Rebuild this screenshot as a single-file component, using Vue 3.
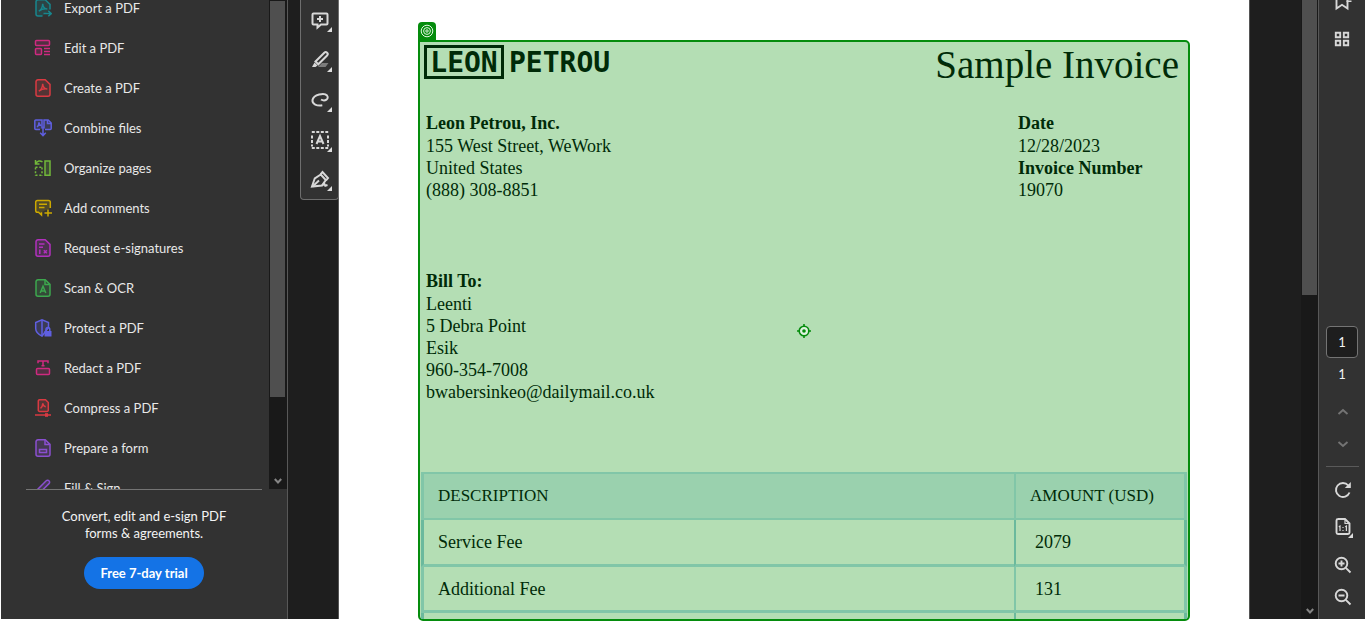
<script setup>
import { ref } from 'vue'

const page = 'M4 .8h7.2l4.8 4.6v9.800a2 2 0 0 1-2 2H4a2 2 0 0 1-2-2V2.800a2 2 0 0 1 2-2z'
const acrobat = 'M4.800 12.200c2.200-1.200 3.800-4 3.900-7.400.2 3.400 1.900 5.200 4.600 5.200-3-.5-6 .4-8.500 2.200z'

const tools = [
  { name: 'Export a PDF', color: '#17868d', shapes: [
    { d: 'M8.500 17H4a2 2 0 0 1-2-2V2.800a2 2 0 0 1 2-2h7.200l4.800 4.600v5', f: 1 },
    { d: acrobat }, { d: 'M9.500 14.600h7.500M14.300 11.900l2.900 2.700-2.900 2.700' } ] },
  { name: 'Edit a PDF', color: '#cf2a80', shapes: [
    { d: 'M2.500 1.500h12a1 1 0 0 1 1 1v3a1 1 0 0 1-1 1h-12a1 1 0 0 1-1-1v-3a1 1 0 0 1 1-1z', f: 1 },
    { d: 'M2.500 9.500h4a1 1 0 0 1 1 1v4a1 1 0 0 1-1 1h-4a1 1 0 0 1-1-1v-4a1 1 0 0 1 1-1z', f: 1 },
    { d: 'M10 9.500h6M10 12.500h6M10 15.500h6' } ] },
  { name: 'Create a PDF', color: '#d93a42', shapes: [{ d: page, f: 1 }, { d: acrobat }] },
  { name: 'Combine files', color: '#5f5fe0', shapes: [
    { d: 'M6 10.500H1.800a1 1 0 0 1-1-1V2a1 1 0 0 1 1-1H8v8.500M11 10.500h5.200a1 1 0 0 0 1-1V4l-3-3H10v8.500', f: 1 },
    { d: 'M3 8c1.200-.8 2-2.600 2-4.800.2 2 .9 3.200 2.400 3.400M13.500 1v3.500h3.500' },
    { d: 'M9 7.500v9M6.200 13.800L9 16.600l2.800-2.800' } ] },
  { name: 'Organize pages', color: '#72b83a', shapes: [
    { d: 'M11 2h5v14.300h-5z', f: 1 },
    { d: 'M1.500 8.300h7M8 8.500v8M1.500 16.300h7M1.500 8.500v8', dash: '2 1.800' },
    { d: 'M1.800 4.500C3.500 1.500 6 1.300 8.500 2.800M1.500 1v4h4' } ] },
  { name: 'Add comments', color: '#cda900', shapes: [
    { d: 'M7.500 13.200V16L4.500 13.200H3.500a1.800 1.800 0 0 1-1.800-1.800V3.200a1.800 1.800 0 0 1 1.800-1.800h11a1.800 1.800 0 0 1 1.800 1.800V9', f: 1 },
    { d: 'M5 5.300h8M5 8.500h5.500M14 10.500v7M10.500 14H18' } ] },
  { name: 'Request e-signatures', color: '#b130bd', shapes: [
    { d: page, f: 1 }, { d: 'M5 5h5.500M5 8.300h4M5.800 10.500v3.300M9.800 11.300l3 3M12.800 11.300l-3 3M5 14.300h1.500' } ] },
  { name: 'Scan & OCR', color: '#3da74e', shapes: [
    { d: page, f: 1 }, { d: 'M11 1v4.500h4.500M6.200 14L9 7.300l2.800 6.700M7.200 12h3.600' } ] },
  { name: 'Protect a PDF', color: '#5f5fe0', shapes: [
    { d: 'M14.500 8.500V3.500L8 .8 1.700 3.500v6c0 3.300 2.500 5.800 6.300 7.700z', f: 1 }, { d: 'M8 1v16' },
    { d: 'M12 12v-1.500a1.900 1.900 0 0 1 3.800 0V12' }, { d: 'M10.500 12h7v5.500h-7z', solid: 1 } ] },
  { name: 'Redact a PDF', color: '#cf2a80', shapes: [
    { d: 'M3.500 9.500h11a1 1 0 0 1 1 1v4a1 1 0 0 1-1 1h-11a1 1 0 0 1-1-1v-4a1 1 0 0 1 1-1z', f: 1 },
    { d: 'M4 4.200V2h10v2.200M9 2v5M7.500 6.800h3' } ] },
  { name: 'Compress a PDF', color: '#d93a42', shapes: [
    { d: 'M5.500.8h6L14.300 3.500v7.700a1.200 1.200 0 0 1-1.200 1.200H5.500a1.200 1.200 0 0 1-1.200-1.200V2a1.200 1.200 0 0 1 1.200-1.200z', f: 1 },
    { d: 'M6.500 9.300c1.300-.8 2.200-2.500 2.300-5 .2 2.300 1.200 3.400 3 3.400M1 16h16' }, { d: 'M12.500 14.200v3.600', w: 3 } ] },
  { name: 'Prepare a form', color: '#8a4fd0', shapes: [
    { d: page, f: 1 }, { d: 'M11 1v4.500h4.500M5.500 10.500h7v3h-7z' } ] },
  { name: 'Fill & Sign', color: '#8a4fd0', shapes: [
    { d: 'M2.500 15l1-4.500 8.700-8.700a1.900 1.900 0 0 1 2.800 0 1.900 1.900 0 0 1 0 2.800L6.500 13z', f: 1 } ] }
]

const quickTools = [
  { name: 'Add comment', shapes: [
    { d: 'M3.500 3.500h13a1 1 0 0 1 1 1v9a1 1 0 0 1-1 1H11L7.500 17.500v-3h-4a1 1 0 0 1-1-1v-9a1 1 0 0 1 1-1z' },
    { d: 'M10 6v6M7 9h6' } ] },
  { name: 'Highlight', shapes: [
    { d: 'M8 17l4-4h6.500l-3 4z', solid: 1, dim: 1 },
    { d: 'M5.500 11.500L14.300 2.700a1.900 1.900 0 0 1 2.800 2.800L8.300 14.300z' },
    { d: 'M4.500 12.500l3 3L5.500 17H2z', solid: 1 } ] },
  { name: 'Draw', shapes: [{ d: 'M11 9.500c4 2.500 8.500-.8 6-4C14.500 2.500 3.500 4.300 2.500 10c-.6 4.200 4.500 6.200 9.800 5.300' }] },
  { name: 'Select text', shapes: [
    { d: 'M1.800 2h16.400M1.800 18h16.400M2 5.500v11M18 5.500v11', dash: '3 1.500' },
    { d: 'M6.500 14L10 6l3.500 8M7.600 11.500h4.800' } ] },
  { name: 'Sign', shapes: [
    { d: 'M2 16.500L4.800 8.300l6-3.800 5 5.500-3.800 5.500z' }, { d: 'M10.500 4.300l2-2.300 5.500 6L16 10.500' },
    { d: 'M2.500 16.500l6.500-6M12 15.500l2.300-1.800 1 2 2.200-.7' } ] }
]

const rows = [
  { description: 'Service Fee', amount: '2079' },
  { description: 'Additional Fee', amount: '131' },
  { description: '', amount: '' }
]

const currentPage = ref('1')
</script>

<template>
  <div class="viewer">
    <aside class="sidebar">
      <div class="tools">
        <ul class="tool-list">
          <li v-for="t in tools" :key="t.name">
            <button type="button" class="tool" :style="{ '--tint': t.color }">
              <svg class="tool-icon" viewBox="0 0 18 18" aria-hidden="true">
                <path v-for="(s, i) in t.shapes" :key="i" :d="s.d" :class="{ tinted: s.f, solid: s.solid }"
                  :stroke-dasharray="s.dash" :stroke-width="s.w || 1.5" />
              </svg>
              <span>{{ t.name }}</span>
            </button>
          </li>
        </ul>
        <div class="scrollbar tools-scroll">
          <div class="thumb tools-thumb"></div>
          <svg class="scroll-arrow" viewBox="0 0 8 6" aria-hidden="true"><path d="M.8 1L4 4.500 7.200 1" /></svg>
        </div>
      </div>
      <footer class="promo">
        <p>Convert, edit and e-sign PDF<br>forms &amp; agreements.</p>
        <button type="button" class="trial">Free 7-day trial</button>
      </footer>
    </aside>

    <div class="gutter">
      <nav class="quickbar" aria-label="Quick tools">
        <button v-for="q in quickTools" :key="q.name" type="button" class="quick" :aria-label="q.name">
          <svg viewBox="0 0 20 20" aria-hidden="true">
            <path v-for="(s, i) in q.shapes" :key="i" :d="s.d" :class="{ solid: s.solid, dim: s.dim }" :stroke-dasharray="s.dash" />
          </svg>
          <i class="corner"></i>
        </button>
      </nav>
    </div>

    <main class="paper">
      <section class="invoice">
        <span class="tag">
          <svg viewBox="0 0 14 14" aria-hidden="true">
            <circle cx="7" cy="7" r="5.800" /><circle cx="7" cy="7" r="3.400" /><circle cx="7" cy="7" r="1.200" />
          </svg>
        </span>
        <header class="head">
          <div class="logo"><span class="boxed">LEON</span><span class="plain">PETROU</span></div>
          <h1>Sample Invoice</h1>
        </header>
        <div class="meta">
          <address>
            <strong>Leon Petrou, Inc.</strong>
            <span>155 West Street, WeWork</span>
            <span>United States</span>
            <span>(888) 308-8851</span>
          </address>
          <div class="dates">
            <strong>Date</strong>
            <span>12/28/2023</span>
            <strong>Invoice Number</strong>
            <span>19070</span>
          </div>
        </div>
        <address class="bill">
          <strong>Bill To:</strong>
          <span>Leenti</span>
          <span>5 Debra Point</span>
          <span>Esik</span>
          <span>960-354-7008</span>
          <span>bwabersinkeo@dailymail.co.uk</span>
        </address>
        <div class="table-clip">
          <table>
            <thead>
              <tr><th scope="col">DESCRIPTION</th><th scope="col" class="amount">AMOUNT (USD)</th></tr>
            </thead>
            <tbody>
              <tr v-for="(r, i) in rows" :key="i">
                <td>{{ r.description }}</td>
                <td class="amount">{{ r.amount }}</td>
              </tr>
            </tbody>
          </table>
        </div>
        <svg class="anchor" viewBox="0 0 14 14" aria-hidden="true">
          <circle cx="7" cy="7" r="4.800" fill="#dff3df" /><path d="M7 0v3M7 11v3M0 7h3M11 7h3" />
          <circle class="dot" cx="7" cy="7" r="1.800" />
        </svg>
      </section>
    </main>

    <div class="margin"></div>
    <div class="scrollbar page-scroll">
      <div class="thumb page-thumb"></div>
      <svg class="scroll-arrow" viewBox="0 0 8 6" aria-hidden="true"><path d="M.8 1L4 4.500 7.200 1" /></svg>
    </div>

    <aside class="rail">
      <div class="rail-top">
        <button type="button" class="rail-btn mark" aria-label="Bookmarks">
          <svg viewBox="0 0 20 20" aria-hidden="true"><path d="M4.500 0v16.500L10 12.800l5.500 3.700V0" /><path class="solid" d="M14.500 8.500h5v1.500h-5z" /></svg>
        </button>
        <button type="button" class="rail-btn" aria-label="Page thumbnails">
          <svg viewBox="0 0 20 20" aria-hidden="true"><path d="M3.800 3.800h4.400v4.400H3.800zM11.800 3.800h4.400v4.400h-4.400zM3.800 11.800h4.400v4.400H3.800zM11.800 11.800h4.400v4.400h-4.400z" /></svg>
        </button>
      </div>
      <div class="rail-bottom">
        <input v-model="currentPage" class="page-input" aria-label="Page number">
        <span class="page-total">1</span>
        <button type="button" class="rail-btn faint" aria-label="Previous page">
          <svg viewBox="0 0 20 20" aria-hidden="true"><path d="M5.500 12l4.500-4 4.500 4" /></svg>
        </button>
        <button type="button" class="rail-btn faint" aria-label="Next page">
          <svg viewBox="0 0 20 20" aria-hidden="true"><path d="M5.500 8l4.500 4 4.500-4" /></svg>
        </button>
        <hr>
        <button type="button" class="rail-btn" aria-label="Rotate">
          <svg viewBox="0 0 20 20" aria-hidden="true"><path d="M16.500 12.500A7 7 0 1 1 15.300 5.500" /><path class="solid" d="M17.800 2v6h-6z" /></svg>
        </button>
        <button type="button" class="rail-btn fit" aria-label="Actual size">
          <svg viewBox="0 0 20 20" aria-hidden="true"><path d="M4.500 2h7.500l4.500 4.500v9a1.500 1.500 0 0 1-1.500 1.500H5a1.500 1.500 0 0 1-1.500-1.500V3.500A1.500 1.500 0 0 1 5 2z" /><path class="thin" d="M12 2v4.500h4.500M5.800 9.800L7 9v5M12.200 9.800l1.200-.8v5M10 10v1M10 13v1" /></svg>
          <i class="corner"></i>
        </button>
        <button type="button" class="rail-btn" aria-label="Zoom in">
          <svg viewBox="0 0 20 20" aria-hidden="true"><circle cx="8.500" cy="8.500" r="5.800" /><path d="M12.800 12.800L17.500 17.500M8.500 5.500v6M5.500 8.500h6" /></svg>
        </button>
        <button type="button" class="rail-btn" aria-label="Zoom out">
          <svg viewBox="0 0 20 20" aria-hidden="true"><circle cx="8.500" cy="8.500" r="5.800" /><path d="M12.800 12.800L17.500 17.500M5.500 8.500h6" /></svg>
        </button>
      </div>
    </aside>
  </div>
</template>

<style>
body { margin: 0; background: #fff; }
</style>

<style scoped>
.viewer {
  box-sizing: border-box;
  display: flex;
  height: 100vh;
  padding: 0 1px;
  overflow: hidden;
  background: #fff;
  font-family: Lato, "Open Sans", sans-serif;
  font-size: 13px;
  color: #e8e8e8;
}
.viewer * { box-sizing: border-box; }
button { padding: 0; border: 0; background: none; color: inherit; font: inherit; }
svg { display: block; fill: none; stroke: currentColor; }

.sidebar {
  display: flex;
  flex-direction: column;
  flex: none;
  width: 287px;
  margin-bottom: 2px;
  border-right: 1px solid #585858;
  background: #323232;
}
.tools { display: flex; flex: 1; min-height: 0; overflow: hidden; }
.tool-list { flex: 1; margin: -12px 0 0; padding: 0; list-style: none; }
.tool { display: flex; align-items: center; gap: 12px; width: 100%; height: 40px; padding-left: 33px; text-align: left; }
.tool-icon { width: 18px; height: 18px; color: var(--tint); }
.tinted { fill: color-mix(in srgb, var(--tint) 20%, transparent); }
.solid { fill: currentColor; stroke: none; }
.dim { opacity: 0.45; }

.scrollbar {
  display: flex;
  flex-direction: column;
  justify-content: space-between;
  align-items: center;
  flex: none;
  width: 17px;
  padding: 1px 1px 5px;
  background: #191919;
}
.tools-scroll { width: 18px; padding-right: 2px; }
.thumb { width: 100%; background: #4f4f4f; }
.tools-thumb { height: 82%; }
.page-thumb { height: 48%; }
.scroll-arrow { width: 8px; height: 6px; color: #858585; stroke-width: 2; }

.promo {
  display: flex;
  flex-direction: column;
  align-items: center;
  flex: none;
  height: 130px;
  margin: 0 25px;
  border-top: 1px solid #747474;
}
.promo p { margin: 18px 0 15px; line-height: 17px; text-align: center; white-space: nowrap; color: #f4f4f4; }
.trial { width: 120px; height: 32px; border-radius: 16px; background: #1473e6; color: #fff; font-weight: 700; }

.gutter { flex: none; width: 51px; margin-bottom: 2px; padding-left: 12px; border-right: 1px solid #555; background: #1e1e1e; }
.quickbar {
  width: 39px;
  border: 1px solid #6e6e6e;
  border-top: 0;
  border-radius: 0 0 4px 4px;
  background: #323232;
  color: #d8d8d8;
}
.quick { position: relative; display: grid; place-items: center; width: 37px; height: 40px; }
.quick:last-child { height: 39px; padding-top: 1px; }
.quick svg { width: 20px; height: 20px; stroke-width: 2; }
.corner {
  position: absolute;
  right: 6px;
  bottom: 8px;
  width: 5px;
  height: 5px;
  background: #dcdcdc;
  clip-path: polygon(100% 0, 100% 100%, 0 100%);
}

.paper { display: flex; flex: 1; min-width: 0; padding: 40px 59px 0 79px; background: #fff; }
.invoice {
  position: relative;
  display: flex;
  flex-direction: column;
  flex: 1;
  min-width: 0;
  border: 2px solid #058c0d;
  border-radius: 0 5px 5px 5px;
  background: #b4deb4;
  color: #002b08;
  font-family: "Liberation Serif", serif;
  font-size: 18px;
  line-height: 22px;
}
.tag {
  position: absolute;
  left: -2px;
  top: -20px;
  display: grid;
  place-items: center;
  width: 18px;
  height: 18px;
  border-radius: 4px 4px 0 0;
  background: #058c0d;
  color: #e2f6e2;
}
.tag svg { width: 14px; height: 14px; }
.head { display: flex; justify-content: space-between; height: 70px; padding: 3px 9px 0 4px; }
.logo { display: flex; height: 34px; font: 700 28px/30px "DejaVu Sans Mono", monospace; }
.boxed { width: 80px; border: 3px solid #002b08; text-align: center; }
.plain { padding: 3px 0 0 5px; }
h1 { margin: 0; font-size: 39px; font-weight: 400; line-height: 40px; }
.meta { display: flex; justify-content: space-between; height: 158px; padding-left: 6px; }
address { font-style: normal; }
address > *, .dates > * { display: block; }
.dates { width: 170px; }
.bill { height: 202px; padding-left: 6px; }
strong:first-child { line-height: 23px; }

.table-clip { flex: 1; min-height: 0; margin: 0 1px; overflow: hidden; }
table { width: 100%; border-collapse: separate; border-spacing: 0; }
th, td {
  height: 46px;
  padding: 0 0 0 14px;
  border: 0 solid #81c6a8;
  border-bottom-width: 3px;
  border-left-width: 3px;
  text-align: left;
  font-weight: 400;
}
th { height: 48px; border-top-width: 2px; border-bottom-width: 2px; background: #9ad1ae; font-size: 17px; }
.amount { width: 173px; border-left-width: 2px; border-right-width: 3px; }
td.amount { padding-left: 19px; }
tbody tr:nth-child(odd) td { height: 47px; border-left-color: #6bb99d; border-right-color: #6bb99d; }
.anchor {
  position: absolute;
  left: calc(50% - 7px);
  top: calc(50% - 7px);
  width: 14px;
  height: 14px;
  color: #058c0d;
  stroke-width: 1.6;
}
.dot { fill: currentColor; stroke: none; }

.margin { flex: none; width: 52px; margin-bottom: 2px; border-left: 1px solid #555; background: #1e1e1e; }
.page-scroll { margin-bottom: 2px; padding-top: 0; }

.rail {
  display: flex;
  flex-direction: column;
  justify-content: space-between;
  flex: none;
  width: 47px;
  margin-bottom: 2px;
  border-left: 1px solid #585858;
  background: #323232;
  color: #d8d8d8;
}
.rail-top, .rail-bottom { display: flex; flex-direction: column; align-items: center; }
.rail-top { overflow: hidden; }
.rail-bottom { padding-bottom: 6px; }
.rail-btn { position: relative; display: grid; place-items: center; width: 32px; height: 32px; }
.rail-bottom .rail-btn { padding-left: 2px; }
.rail-btn svg { width: 20px; height: 20px; stroke-width: 1.9; }
.rail-btn .thin { stroke-width: 1.2; }
.mark { margin-top: -14px; margin-bottom: 5px; }
.faint { color: #747474; }
.fit { margin: 5px 0 6px; }
.fit .corner { right: 5px; bottom: 5px; }
.page-input {
  width: 32px;
  height: 32px;
  padding: 0;
  border: 1px solid #747474;
  border-radius: 4px;
  background: #1e1e1e;
  color: #f2f2f2;
  font: inherit;
  text-align: center;
}
.page-total { height: 38px; line-height: 32px; color: #f2f2f2; }
hr { width: 33px; height: 1px; margin: 6px 0 7px; border: 0; background: #5a5a5a; }
</style>
